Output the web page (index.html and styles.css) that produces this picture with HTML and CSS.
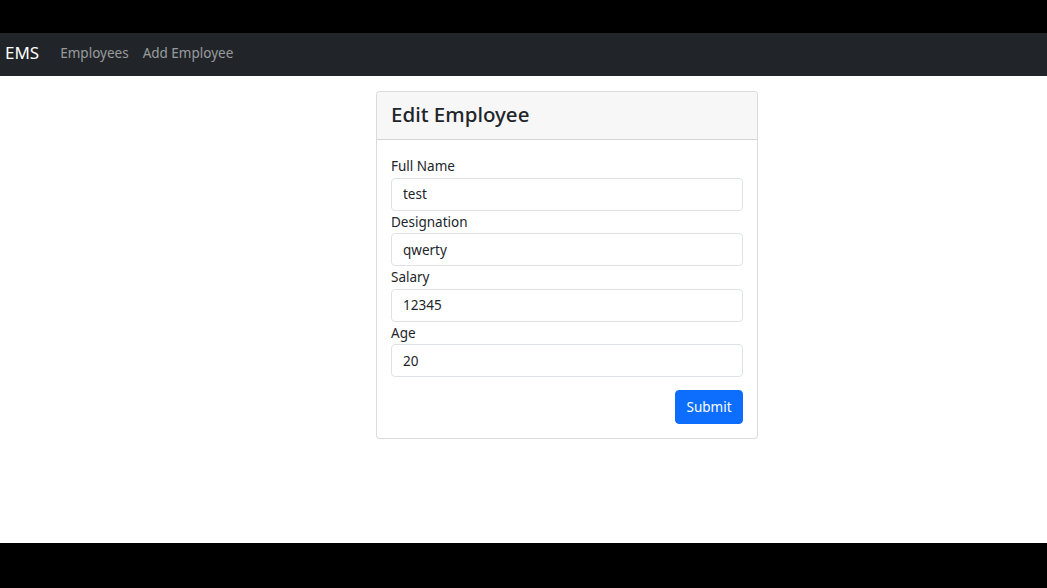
FILE: index.html
```html
<!DOCTYPE html>
<html lang="en">
<head>
<meta charset="utf-8">
<title>EMS - Edit Employee</title>
<link rel="stylesheet" href="styles.css">
</head>
<body>
<div class="letterbox top"></div>
<nav class="navbar">
  <a class="brand" href="#">EMS</a>
  <a class="nav-link" href="#">Employees</a>
  <a class="nav-link" href="#">Add Employee</a>
</nav>
<main class="main">
  <div class="card">
    <div class="card-header"><h3>Edit Employee</h3></div>
    <form class="card-body">
      <label class="label">Full Name</label>
      <input class="input" type="text" value="test">
      <label class="label">Designation</label>
      <input class="input" type="text" value="qwerty">
      <label class="label">Salary</label>
      <input class="input" type="text" value="12345">
      <label class="label">Age</label>
      <input class="input" type="text" value="20">
      <div class="actions"><button class="btn" type="button">Submit</button></div>
    </form>
  </div>
</main>
<div class="letterbox bottom"></div>
</body>
</html>
```

FILE: styles.css
```css
* { box-sizing: border-box; }
html, body { margin: 0; padding: 0; }
body {
  width: 1047px;
  height: 588px;
  overflow: hidden;
  font-family: "Noto Sans", "Open Sans", sans-serif;
  color: #212529;
  background: #000;
  display: flex;
  flex-direction: column;
}
.letterbox.top { height: 33px; background: #000; }
.letterbox.bottom { height: 45px; background: #000; }
.navbar {
  height: 43px;
  background: #212529;
  display: flex;
  align-items: center;
  padding-left: 5px;
  padding-bottom: 4px;
}
.brand {
  color: #fff;
  text-decoration: none;
  font-size: 17px;
  margin-right: 21px;
}
.nav-link {
  color: rgba(255,255,255,0.55);
  text-decoration: none;
  font-size: 13.5px;
  margin-right: 14px;
}
.main {
  height: 467px;
  background: #fff;
  padding-top: 15px;
  padding-left: 376px;
}
.card {
  width: 382px;
  border: 1px solid rgba(0,0,0,0.14);
  border-radius: 4px;
  background: #fff;
}
.card-header {
  height: 48px;
  background: #f7f7f7;
  border-bottom: 1px solid rgba(0,0,0,0.14);
  border-radius: 4px 4px 0 0;
  padding: 0 14px 4px;
  display: flex;
  align-items: center;
}
.card-header h3 {
  margin: 0;
  font-size: 20.5px;
  font-weight: 500;
  color: #212529;
}
.card-body {
  padding: 15px 14px 14px 14px;
  display: flex;
  flex-direction: column;
}
.label {
  display: block;
  font-size: 13.5px;
  line-height: 22.5px;
  color: #212529;
}
.input {
  display: block;
  width: 352px;
  height: 33px;
  border: 1px solid #dee2e6;
  border-radius: 4px;
  padding: 0 11px;
  font-family: inherit;
  font-size: 13.5px;
  color: #212529;
  background: #fff;
}
.actions {
  display: flex;
  justify-content: flex-end;
  margin-top: 13px;
}
.btn {
  width: 68px;
  height: 34px;
  background: #0d6efd;
  color: #fff;
  border: 1px solid #0d6efd;
  border-radius: 4px;
  font-family: inherit;
  font-size: 13.5px;
  padding: 0;
}
```
